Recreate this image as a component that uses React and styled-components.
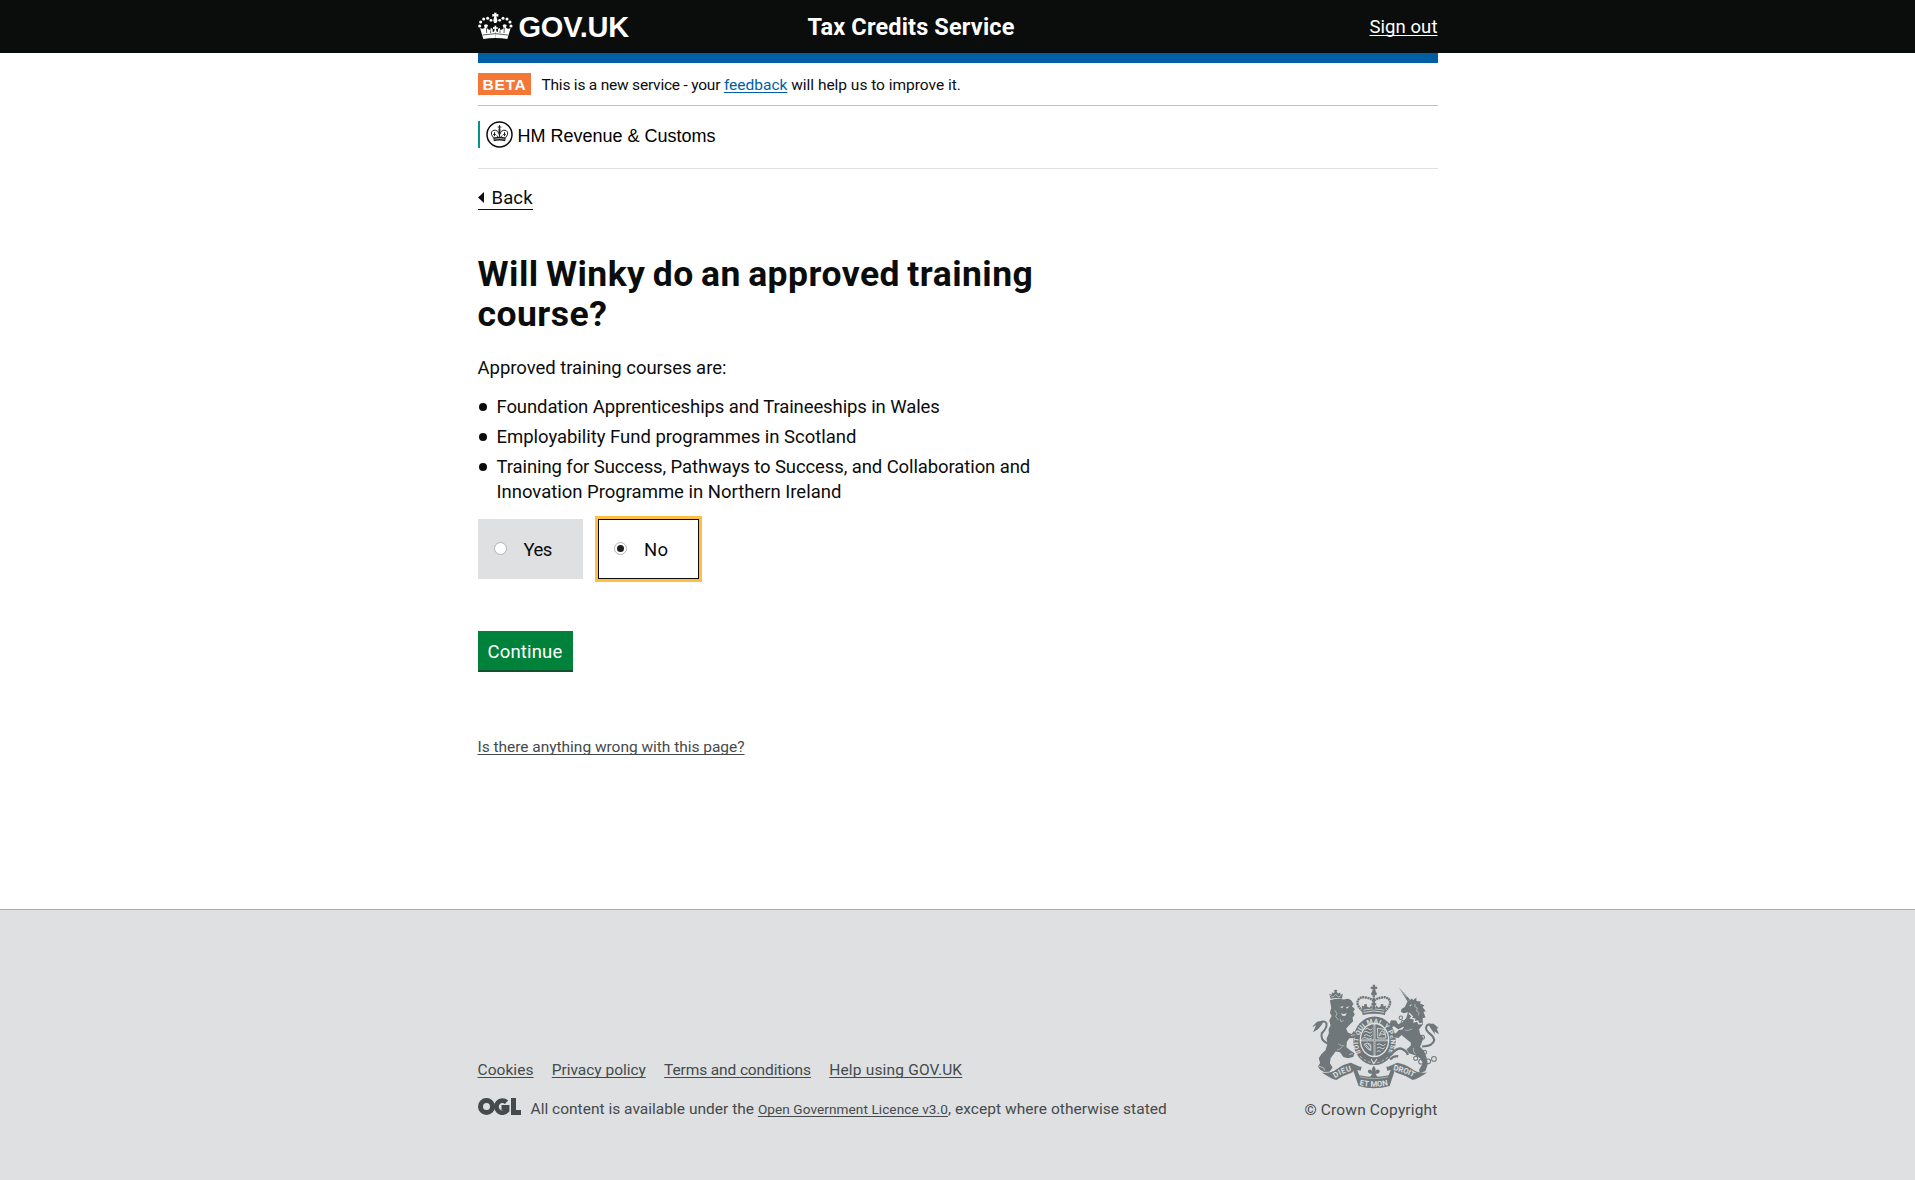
import React from "react";
import styled, { createGlobalStyle, css } from "styled-components";

const Global = createGlobalStyle`
  * { box-sizing: border-box; }
  body {
    margin: 0;
    background: #fff;
    color: #0b0c0c;
    font-family: Roboto, "Liberation Sans", sans-serif;
    font-size: 18.5px;
  }
  h1, p, ul { margin: 0; padding: 0; font-weight: 400; }
`;

const tracking = css`
  letter-spacing: ${(p) => p.$ls || 0}px;
`;

const Page = styled.div`
  min-height: 1180px;
  display: flex;
  flex-direction: column;
`;

const Container = styled.div`
  width: 960px;
  margin: 0 auto;
`;

const Header = styled.header`
  height: 53px;
  background: #0b0c0c;
  color: #fff;
`;

const HeaderInner = styled(Container)`
  height: 53px;
  display: grid;
  grid-template-columns: 330px 1fr auto;
`;

const Logo = styled.div`
  display: flex;
  padding-top: 12px;
  gap: 6px;
  svg { width: 35px; height: 27px; flex: none; }
`;

const LogoText = styled.span`
  font-family: "Liberation Sans", Arial, sans-serif;
  font-size: 29px;
  font-weight: 700;
  line-height: 31px;
  white-space: nowrap;
  ${tracking}
`;

const ServiceName = styled.div`
  font-size: 23.5px;
  font-weight: 700;
  line-height: 55px;
  ${tracking}
`;

const Link = styled.a`
  color: ${(p) => p.$color || "#454a4c"};
  text-decoration: underline;
  text-decoration-skip-ink: none;
  text-decoration-thickness: 1px;
  text-underline-offset: ${(p) => p.$offset || 2}px;
  white-space: nowrap;
  ${tracking}
`;

const SignOut = styled(Link)`
  line-height: 55px;
`;

const BlueBar = styled.div`
  height: 10px;
  background: #005ea5;
`;

const PhaseBanner = styled.div`
  height: 43px;
  display: flex;
  align-items: center;
  border-bottom: 1px solid #bfc1c3;
`;

const PhaseTag = styled.strong`
  width: 53px;
  height: 22px;
  background: #f47738;
  color: #fff;
  font-family: "Liberation Sans", Arial, sans-serif;
  font-size: 15.5px;
  font-weight: 700;
  line-height: 23px;
  padding-left: 5px;
  ${tracking}
`;

const PhaseText = styled.p`
  margin-left: 11px;
  padding-top: 1px;
  font-size: 15.5px;
  line-height: 22px;
  white-space: pre;
`;

const Run = styled.span`
  ${tracking}
`;

const Organisation = styled.div`
  height: 63px;
  padding-top: 15px;
  border-bottom: 1px solid #dee0e2;
`;

const OrganisationName = styled.div`
  display: flex;
  height: 27px;
  padding-left: 6px;
  border-left: 2px solid #009390;
  font-family: "Liberation Sans", Arial, sans-serif;
  font-size: 18px;
  line-height: 31px;
  color: #000;
  svg { width: 27px; height: 27px; margin-right: 5px; }
`;

const BackLink = styled.a`
  display: flex;
  align-items: center;
  width: 55px;
  height: 23px;
  margin-top: 18px;
  border-bottom: 1px solid #0b0c0c;
  line-height: 22px;
  ${tracking}
  svg { width: 6px; height: 11px; margin: -2px 8px 0 0; flex: none; }
`;

const Main = styled.main`
  height: 856px;
`;

const Title = styled.h1`
  width: 600px;
  margin-top: 44px;
  font-size: 35.5px;
  font-weight: 700;
  line-height: 40px;
  word-spacing: -2px;
  ${tracking}
`;

const Lead = styled.p`
  margin-top: 22px;
  line-height: 25px;
  ${tracking}
`;

const List = styled.ul`
  list-style: none;
  margin-top: 14px;
  display: flex;
  flex-direction: column;
  gap: 5px;
`;

const Item = styled.li`
  display: flex;
  gap: 10px;
  line-height: 25px;
  ${tracking}
  &::before {
    content: "";
    width: 8px;
    height: 8px;
    flex: none;
    margin: 8px 0 0 1px;
    border-radius: 50%;
    background: #0b0c0c;
  }
`;

const Line = styled.span`
  display: block;
  ${tracking}
`;

const Choices = styled.div`
  display: flex;
  gap: 15px;
  margin-top: 14px;
`;

const Choice = styled.label`
  display: flex;
  align-items: center;
  width: ${(p) => p.$width}px;
  height: 60px;
  padding-left: ${(p) => (p.$selected ? 15 : 16)}px;
  background: ${(p) => (p.$selected ? "#fff" : "#dee0e2")};
  border: ${(p) => (p.$selected ? "1px solid #0b0c0c" : "0")};
  outline: ${(p) => (p.$selected ? "3px solid #ffbf47" : "0")};
  line-height: 22px;
  ${tracking}
`;

const ChoiceText = styled.span`
  padding-top: 2px;
`;

const Radio = styled.span`
  display: grid;
  place-items: center;
  width: 13px;
  height: 13px;
  margin: 0 ${(p) => p.$gap}px 1px 0;
  border: 1px solid #b3b3b3;
  border-radius: 50%;
  background: #fff;
  &::after {
    content: "";
    width: 7px;
    height: 7px;
    border-radius: 50%;
    background: ${(p) => (p.$on ? "#1f1f1f" : "transparent")};
  }
`;

const ContinueButton = styled.button`
  display: block;
  width: 95px;
  height: 41px;
  margin-top: 52px;
  padding: 2px 0 0;
  border: 0;
  border-bottom: 2px solid #14502f;
  background: #00823b;
  color: #fff;
  font-family: inherit;
  font-size: 18.5px;
  line-height: 39px;
  text-align: center;
  ${tracking}
`;

const Report = styled.p`
  margin-top: 64px;
  font-size: 15.5px;
  line-height: 22px;
`;

const Footer = styled.footer`
  flex: 1;
  border-top: 1px solid #a1acb2;
  background: #dee0e2;
  color: #454a4c;
  font-size: 15.5px;
`;

const FooterInner = styled(Container)`
  display: flex;
  justify-content: space-between;
  padding-top: 74px;
`;

const FooterMeta = styled.div`
  padding-top: 75px;
`;

const FooterLinks = styled.nav`
  display: flex;
  gap: 18.3px;
  line-height: 22px;
`;

const Licence = styled.div`
  display: flex;
  align-items: flex-start;
  margin-top: 17px;
  svg { width: 43px; height: 17px; margin: 0 10px 0 0; }
`;

const LicenceText = styled.p`
  font-size: 15.5px;
  line-height: 22px;
  white-space: pre;
`;

const LicenceLink = styled(Link)`
  font-size: 13.6px;
`;

const Copyright = styled.div`
  display: flex;
  flex-direction: column;
  align-items: flex-end;
  svg { width: 127px; height: 105px; margin-right: -1px; }
`;

const CopyrightText = styled.span`
  margin-top: 10px;
  line-height: 22px;
  ${tracking}
`;

function CrownLogo() {
  const half = (
    <g>
      <circle cx="29" cy="79" r="4.600" />
      <circle cx="32" cy="67" r="4.600" />
      <circle cx="41" cy="58" r="4.600" />
      <circle cx="53" cy="56" r="4.600" />
      <circle cx="63" cy="62" r="4.200" />
      <path d="M30 85 Q38 90 44 84 L42 76 L48 74 L54 76 L51 86 Q57 92 62 90 L62 84 L68 88 L68 96 L76 96 L76 115 Q56 115 40 118 Z" />
    </g>
  );
  return (
    <svg viewBox="24 37 105 81" fill="#fff">
      {half}
      <g transform="matrix(-1 0 0 1 152 0)">{half}</g>
      <path d="M72 39h8l-1 5 6-1v8l-6-1 2 8q3 4 0 8l-2 4h-6l-2-4q-3-4 0-8l2-8-6 1v-8l6 1z" />
      <path d="M73 78h6l-1 5 5-1v6l-5-1 2 10h-8l2-10-5 1v-6l5 1z" />
      <path d="M38 106Q76 98 114 106" fill="none" stroke="#0b0c0c" strokeWidth="2" />
      <path d="M49 84l1 16M103 84l-1 16M62 92v8M90 92v8" stroke="#0b0c0c" strokeWidth="2" />
    </svg>
  );
}

function RevenueCrest() {
  const half = (
    <g>
      <path d="M69 115Q60 104 63 98Q66 91 74 92Q84 93 85 103" fill="none" stroke="#222" strokeWidth="3" />
      <path d="M72 98v12M68 105h8M79 108l3 4" fill="none" stroke="#222" strokeWidth="3" />
    </g>
  );
  return (
    <svg viewBox="46.500 64.500 81 81" fill="#222">
      <circle cx="87" cy="105" r="37.500" fill="#fff" stroke="#0b0c0c" strokeWidth="4.500" />
      {half}
      <g transform="matrix(-1 0 0 1 174 0)">{half}</g>
      <path d="M85.500 77h3v4h4v3h-4l1.500 7-1.500 22h-3l-1.500-22 1.500-7h-4v-3h4z" />
      <path d="M68 114Q87 109 106 114L104 125Q87 121 70 125Z" />
      <path d="M72 119Q87 115 102 119" stroke="#fff" strokeWidth="1.800" fill="none" />
    </svg>
  );
}

function OglMark() {
  return (
    <svg viewBox="0 0 43 17" fill="none" stroke="#454a4c" strokeWidth="5">
      <circle cx="8.500" cy="8.500" r="6" />
      <path d="M28.500 4.300A6 6 0 1 0 29 12.500V9.500H23.500" strokeWidth="4.800" />
      <path d="M35.500 0V14.500H43" />
    </svg>
  );
}

function RoyalArms() {
  return (
    <svg viewBox="54 42 376 311" preserveAspectRatio="none" fill="#6f777b">
      {/* central crown */}
      <path d="M234 44h7v6h6v7h-6l2 8q5 4 2 10h-15q-3-6 2-10l2-8h-6v-7h6z" />
      <path d="M204 122Q184 104 190 91Q196 79 213 82Q228 84 237 92Q246 84 261 82Q278 79 284 91Q290 104 270 122" fill="none" stroke="#6f777b" strokeWidth="7" strokeDasharray="6 1.500" />
      <path d="M237 75v42" stroke="#6f777b" strokeWidth="7" strokeDasharray="6 1.500" />
      <path d="M203 119l-2-13 7 3 1-7 7-1 1 8 7 3 5-6 4 6 1-7-4 1v-8l4 1-1-5h8l-1 5 4-1v8l-4-1 1 7 4-6 5 6 7-3 1-8 7 1 1 7 7-3-2 13q-34-9-68 0z" />
      <path d="M202 121Q237 112 272 121L270 134Q237 126 204 134Z" />
      <path d="M207 126Q237 118 267 126" stroke="#dee0e2" strokeWidth="2.500" fill="none" />

      {/* garter and shield */}
      <ellipse cx="239" cy="210" rx="63" ry="72" />
      <ellipse cx="239" cy="208" rx="44" ry="51" fill="#dee0e2" />
      <ellipse cx="239" cy="208" rx="40" ry="47" />
      <path d="M239 160v96M198 209h82" stroke="#dee0e2" strokeWidth="5" />
      <path d="M239 163v90M201 209h76" stroke="#6f777b" strokeWidth="1.500" />
      <g stroke="#dee0e2" strokeWidth="2.600" fill="none">
        <path d="M207 185q7-6 13 0t13-2M208 195q7-6 13 0t12-2M212 176q6-5 11 0t10-2M203 203q8-5 14 0t14-1" />
        <path d="M248 173l21 4 4 25-24 0zM254 195q2-14 8-14t6 12l-7-4z" />
        <path d="M208 221q10-8 20 0v18q-10-2-20-18zM213 221l13 16M219 219l9 10" />
        <path d="M246 222q7-6 13 0t13-2M246 232q7-6 13 0t10-2M246 242q6-5 11 0" />
      </g>
      <path id="garter" d="M199 246A48 56 0 1 1 279 246" fill="none" />
      <text fill="#dee0e2" fontFamily="Roboto, sans-serif" fontWeight="700" fontSize="20">
        <textPath href="#garter" textLength="226">SOIT QUI MAL Y PENSE</textPath>
      </text>
      <path d="M196 256Q239 296 282 256" fill="none" stroke="#dee0e2" strokeWidth="2" strokeDasharray="8 6" />
      <path d="M229 264l8 14 9-14" fill="none" stroke="#dee0e2" strokeWidth="3" />

      {/* lion */}
      <path d="M109 86l-4-15 7 3 1-7 6 2 2-5-3-3 6-2 5 1-2 5 4 5 6-3 2 7 6-3-2 15q-17-5-34 0z" />
      <path d="M107 75l9 6 8-8 9 8 8-6" fill="none" stroke="#dee0e2" strokeWidth="1.800" />
      <path d="M107 90Q126 82 149 88Q162 82 170 90L177 101 172 108 181 116 176 124 181 132 174 142 176 152 166 162 155 174 160 186 171 190 178 181 187 190 178 202 165 203 157 213 156 229 169 240 180 247 176 258 160 262 147 258 137 244 124 242 109 262 107 277 115 289 106 302 90 303 78 296 72 286 78 276 74 262 82 249 94 238 100 218 97 204 104 188 103 176 109 164 105 150 112 137 107 127 111 113Z" />
      <path d="M101 219Q77 207 83 188Q99 172 97 159Q91 147 77 160L66 176" fill="none" stroke="#6f777b" strokeWidth="6" />
      <path d="M87 150L69 154 54 169 66 164 57 185 72 176 84 161Z" />
      <path d="M137 110l10-3-3 7zM155 110l10-1-8 6zM139 128q9 6 19-1l-6 10-8-1z" fill="#dee0e2" />
      <path d="M122 120l6 10-4 8 8 11M137 145l3 9 8-4M132 219q10 8 18 6M128 238q10-3 16-10" fill="none" stroke="#dee0e2" strokeWidth="1.600" />
      <path d="M75 286l13 4 4 9M164 251l11-3M169 195l13-3" fill="none" stroke="#dee0e2" strokeWidth="2" />

      {/* unicorn */}
      <path d="M311 52L344 88 337 94Z" />
      <path d="M315 60l7 5M320 67l8 6M327 75l8 5" stroke="#dee0e2" strokeWidth="1.500" />
      <path d="M337 93L351 85 353 90 363 82 363 92 377 94 373 99 387 106 381 110 391 123 384 124 390 141 382 143 382 163 371 176 374 190 384 201 379 216 374 228 386 241 393 259 397 278 390 300 373 306 371 296 382 277 374 262 359 253 341 247 334 235 346 225 347 216 336 207 319 193 310 202 296 200 291 193 303 187 311 178 322 177 327 168 309 176 297 167 287 171 284 160 288 149 303 150 309 161 322 155 333 143 338 126 325 129 317 124 319 116 329 110Z" />
      <path d="M342 105l7-3-2 6z" fill="#dee0e2" />
      <path d="M341 128l10 10-5 5 12 3-2 8 11-2 3 8 10-1" fill="none" stroke="#dee0e2" strokeWidth="4" />
      <path d="M360 101l-2 8 8 4-3 9 8 4-2 9M351 175q-12 6-22 4M360 250q-8-9-6-19" fill="none" stroke="#dee0e2" strokeWidth="1.600" />
      <path d="M287 252q19-23 33-18t18 18M285 265q12-11 24-9" fill="none" stroke="#6f777b" strokeWidth="7" />
      <path d="M380 227Q412 227 416 208Q413 196 400 187Q387 174 394 165Q403 157 415 171" fill="none" stroke="#6f777b" strokeWidth="6" />
      <path d="M398 160L414 160 429 172 423 174 430 191 416 182 419 192 405 173Z" />
      <g fill="none" stroke="#6f777b" strokeWidth="3">
        <circle cx="317" cy="142" r="5" /><circle cx="323" cy="155" r="5" />
        <circle cx="381" cy="200" r="6" /><circle cx="387" cy="244" r="6" />
        <circle cx="361" cy="262" r="6" /><circle cx="377" cy="272" r="7" />
        <circle cx="398" cy="271" r="7" /><circle cx="415" cy="264" r="7" />
      </g>

      {/* motto ribbon */}
      <path d="M83 304Q111 308 129 293Q146 279 169 275L194 286Q179 290 173 304Q147 312 126 326Q112 324 83 304Z" />
      <path d="M395 304Q367 308 349 293Q332 279 306 275L281 286Q296 290 302 304Q331 312 352 326Q366 324 395 304Z" />
      <path d="M174 292Q184 284 201 287L198 299 188 297 194 312Q237 322 281 312L287 297 277 299 274 287Q291 284 301 292L284 344Q237 358 192 344Z" />
      <path d="M195 317Q237 327 279 317M172 304L189 345M303 304L286 345" fill="none" stroke="#dee0e2" strokeWidth="1.500" />
      <path d="M237 284q9 10 3 19 4-11 13-6 5 7-5 11h-6l6 10h-22l6-10h-6q-10-4-5-11 9-5 13 6-6-9 3-19z" />
      <path id="mottoLeft" d="M122 321Q145 305 178 298" fill="none" />
      <path id="mottoMid" d="M194 341Q237 352 282 341" fill="none" />
      <path id="mottoRight" d="M294 297Q330 304 358 321" fill="none" />
      <g fill="#dee0e2" fontFamily="Roboto, sans-serif" fontWeight="700" fontSize="23">
        <text><textPath href="#mottoLeft" textLength="54">DIEU</textPath></text>
        <text><textPath href="#mottoMid" textLength="86">ET MON</textPath></text>
        <text><textPath href="#mottoRight" textLength="64">DROIT</textPath></text>
      </g>
    </svg>
  );
}

const footerLinks = [
  { label: "Cookies", ls: 0.055 },
  { label: "Privacy policy", ls: -0.032 },
  { label: "Terms and conditions", ls: -0.12 },
  { label: "Help using GOV.UK", ls: 0.171 },
];

export default function App() {
  return (
    <Page>
      <Global />
      <Header>
        <HeaderInner>
          <Logo>
            <CrownLogo />
            <LogoText $ls={-0.2}>GOV.UK</LogoText>
          </Logo>
          <ServiceName $ls={0.158}>Tax Credits Service</ServiceName>
          <SignOut $color="#fff" $ls={0.065}>Sign out</SignOut>
        </HeaderInner>
      </Header>
      <Main>
        <Container>
          <BlueBar />
          <PhaseBanner>
            <PhaseTag $ls={0.7}>BETA</PhaseTag>
            <PhaseText>
              <Run $ls={-0.21}>This is a new service - your </Run>
              <Link $color="#005ea5">feedback</Link>
              <Run $ls={-0.02}> will help us to improve it.</Run>
            </PhaseText>
          </PhaseBanner>
          <Organisation>
            <OrganisationName>
              <RevenueCrest />
              HM Revenue &amp; Customs
            </OrganisationName>
          </Organisation>
          <BackLink $ls={0.13}>
            <svg viewBox="0 0 6 11"><path d="M6 0V11L0 5.500Z" fill="#0b0c0c" /></svg>
            Back
          </BackLink>
          <Title $ls={0.47}>Will Winky do an approved training course?</Title>
          <Lead $ls={-0.04}>Approved training courses are:</Lead>
          <List>
            <Item $ls={-0.11}>Foundation Apprenticeships and Traineeships in Wales</Item>
            <Item $ls={-0.03}>Employability Fund programmes in Scotland</Item>
            <Item>
              <div>
                <Line $ls={-0.1}>Training for Success, Pathways to Success, and Collaboration and</Line>
                <Line $ls={-0.01}>Innovation Programme in Northern Ireland</Line>
              </div>
            </Item>
          </List>
          <Choices>
            <Choice $width={105} $ls={-0.5}>
              <Radio $gap={17} />
              <ChoiceText>Yes</ChoiceText>
            </Choice>
            <Choice $width={101} $selected $ls={0.376}>
              <Radio $gap={17.5} $on />
              <ChoiceText>No</ChoiceText>
            </Choice>
          </Choices>
          <ContinueButton $ls={0.177}>Continue</ContinueButton>
          <Report>
            <Link $ls={-0.027}>Is there anything wrong with this page?</Link>
          </Report>
        </Container>
      </Main>
      <Footer>
        <FooterInner>
          <FooterMeta>
            <FooterLinks>
              {footerLinks.map((l) => (
                <Link key={l.label} $ls={l.ls}>{l.label}</Link>
              ))}
            </FooterLinks>
            <Licence>
              <OglMark />
              <LicenceText>
                <Run $ls={0.015}>All content is available under the </Run>
                <LicenceLink $ls={0.076}>Open Government Licence v3.0</LicenceLink>
                <Run $ls={0.057}>, except where otherwise stated</Run>
              </LicenceText>
            </Licence>
          </FooterMeta>
          <Copyright>
            <RoyalArms />
            <CopyrightText $ls={0.158}>© Crown Copyright</CopyrightText>
          </Copyright>
        </FooterInner>
      </Footer>
    </Page>
  );
}
